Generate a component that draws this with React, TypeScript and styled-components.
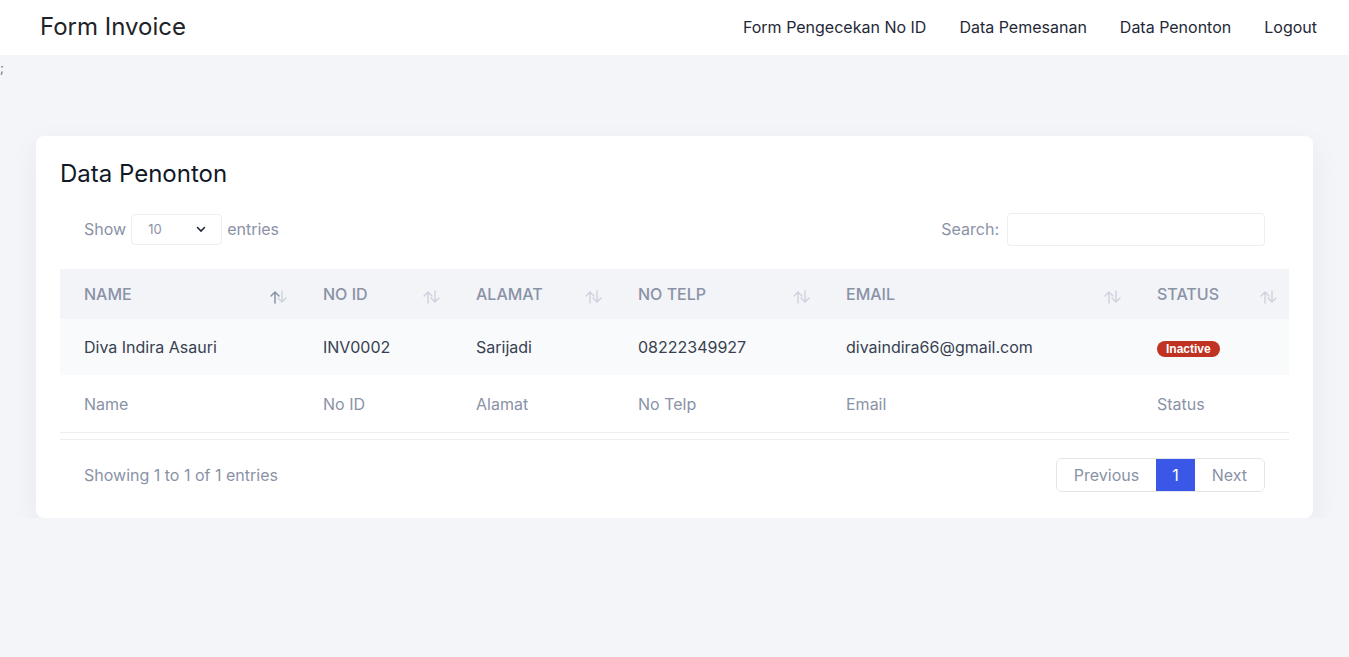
import React from 'react'
import styled, { createGlobalStyle } from 'styled-components'

const GlobalStyle = createGlobalStyle`
  html, body {
    margin: 0;
    padding: 0;
    background: #f4f5f9;
    font-family: Inter, 'Noto Sans', sans-serif;
    color: #374151;
  }
`

const Navbar = styled.nav`
  height: 55px;
  box-sizing: border-box;
  background: #fff;
  display: flex;
  align-items: center;
  justify-content: space-between;
  padding: 0 32px 2px 40px;
`

const Brand = styled.div`
  font-size: 24px;
  color: #1f2328;
`

const NavLinks = styled.div`
  display: flex;
  gap: 33px;
`

const NavLink = styled.a`
  font-size: 16px;
  color: #1f2937;
  text-decoration: none;
`

const Stray = styled.div`
  font-size: 13px;
  color: #6b7280;
  height: 81px;
  line-height: 26px;
`

const Main = styled.main`
  padding: 0 36px;
`

const Card = styled.section`
  background: #fff;
  border-radius: 8px;
  padding: 23px 24px 26px;
  box-shadow: 0 10px 30px rgba(40, 50, 90, 0.06);
`

const Title = styled.h2`
  margin: 0 0 23px;
  font-size: 24px;
  font-weight: 400;
  color: #111827;
  line-height: 30px;
`

const Controls = styled.div`
  display: flex;
  justify-content: space-between;
  align-items: center;
  padding: 0 24px;
  height: 34px;
  margin-bottom: 23px;
  color: #8a92a6;
  font-size: 16px;
`

const Group = styled.label`
  display: flex;
  align-items: center;
  gap: 5px;
`

const Select = styled.div`
  width: 91px;
  height: 31px;
  box-sizing: border-box;
  border: 1px solid #eceef2;
  border-radius: 4px;
  display: flex;
  align-items: center;
  justify-content: space-between;
  padding: 0 14px 0 16px;
  font-size: 13px;
  color: #8a92a6;
`

const SearchInput = styled.input`
  width: 258px;
  height: 33px;
  box-sizing: border-box;
  border: 1px solid #eceef2;
  border-radius: 4px;
  margin-left: 3px;
  outline: none;
`

const Table = styled.table`
  width: 100%;
  border-collapse: collapse;
  font-size: 16px;
`

const HeadCell = styled.th<{ w: number }>`
  width: ${p => p.w}px;
  height: 50px;
  background: #f3f4f8;
  text-align: left;
  font-weight: 500;
  color: #8a92a6;
  padding: 0 10px 0 24px;
  box-sizing: border-box;
  text-transform: uppercase;
`

const HeadInner = styled.div`
  display: flex;
  justify-content: space-between;
  align-items: center;
`

const BodyRow = styled.tr`
  background: #f9fafb;
  height: 56px;
`

const Cell = styled.td`
  padding: 0 24px;
  color: #374151;
`

const FootRow = styled.tr`
  height: 57px;
  border-bottom: 1px solid #eceef2;
`

const FootCell = styled.td`
  padding: 2px 24px 0;
  color: #8a92a6;
`

const Divider = styled.div`
  height: 1px;
  background: #eceef2;
  margin-top: 6px;
`

const Footer = styled.div`
  display: flex;
  justify-content: space-between;
  align-items: center;
  padding: 18px 24px 0;
  color: #8a92a6;
  font-size: 16px;
`

const Pager = styled.div`
  display: flex;
  border: 1px solid #e2e4ea;
  border-radius: 6px;
  overflow: hidden;
  height: 34px;
  box-sizing: border-box;
`

const PageBtn = styled.div<{ active?: boolean }>`
  display: flex;
  align-items: center;
  padding: 0 ${p => (p.active ? 16 : 17)}px;
  color: ${p => (p.active ? '#fff' : '#8a92a6')};
  background: ${p => (p.active ? '#3a57e8' : '#fff')};
  font-size: 16px;
`

const Badge = styled.span`
  display: inline-block;
  background: #c03221;
  color: #fff;
  font-family: 'Liberation Sans', Arial, sans-serif;
  font-weight: 700;
  font-size: 12px;
  line-height: 16px;
  padding: 0 9px;
  border-radius: 8px;
  vertical-align: middle;
`

const SortIcon = ({ active }: { active?: boolean }) => (
  <svg width="20" height="16" viewBox="0 0 20 16" fill="none" strokeWidth="1.5" strokeLinecap="round" strokeLinejoin="round" style={{ marginTop: 5 }}>
    <g stroke={active ? '#8a92a6' : '#cfd3dd'}>
      <path d="M6 14V3M2 7l4-4 4 4" />
    </g>
    <g stroke="#cfd3dd">
      <path d="M13 2v11M9 9l4 4 4-4" />
    </g>
  </svg>
)

const columns = [
  { key: 'Name', w: 239 },
  { key: 'No ID', w: 153 },
  { key: 'Alamat', w: 162 },
  { key: 'No Telp', w: 208 },
  { key: 'Email', w: 311 },
  { key: 'Status', w: 156 },
]

export default function App() {
  return (
    <>
      <GlobalStyle />
      <Navbar>
        <Brand>Form Invoice</Brand>
        <NavLinks>
          <NavLink href="#">Form Pengecekan No ID</NavLink>
          <NavLink href="#">Data Pemesanan</NavLink>
          <NavLink href="#">Data Penonton</NavLink>
          <NavLink href="#">Logout</NavLink>
        </NavLinks>
      </Navbar>
      <Stray>;</Stray>
      <Main>
        <Card>
          <Title>Data Penonton</Title>
          <Controls>
            <Group>
              Show
              <Select>
                10
                <svg width="12" height="12" viewBox="0 0 12 12" fill="none" stroke="#1f2937" strokeWidth="1.6" strokeLinecap="round">
                  <path d="M2.5 4.5L6 8l3.5-3.5" />
                </svg>
              </Select>
              entries
            </Group>
            <Group>
              Search:
              <SearchInput />
            </Group>
          </Controls>
          <Table>
            <thead>
              <tr>
                {columns.map((c, i) => (
                  <HeadCell key={c.key} w={c.w}>
                    <HeadInner>
                      {c.key}
                      <SortIcon active={i === 0} />
                    </HeadInner>
                  </HeadCell>
                ))}
              </tr>
            </thead>
            <tbody>
              <BodyRow>
                <Cell>Diva Indira Asauri</Cell>
                <Cell>INV0002</Cell>
                <Cell>Sarijadi</Cell>
                <Cell>08222349927</Cell>
                <Cell>divaindira66@gmail.com</Cell>
                <Cell>
                  <Badge>Inactive</Badge>
                </Cell>
              </BodyRow>
            </tbody>
            <tfoot>
              <FootRow>
                {columns.map(c => (
                  <FootCell key={c.key}>{c.key}</FootCell>
                ))}
              </FootRow>
            </tfoot>
          </Table>
          <Divider />
          <Footer>
            <span>Showing 1 to 1 of 1 entries</span>
            <Pager>
              <PageBtn>Previous</PageBtn>
              <PageBtn active>1</PageBtn>
              <PageBtn>Next</PageBtn>
            </Pager>
          </Footer>
        </Card>
      </Main>
    </>
  )
}
